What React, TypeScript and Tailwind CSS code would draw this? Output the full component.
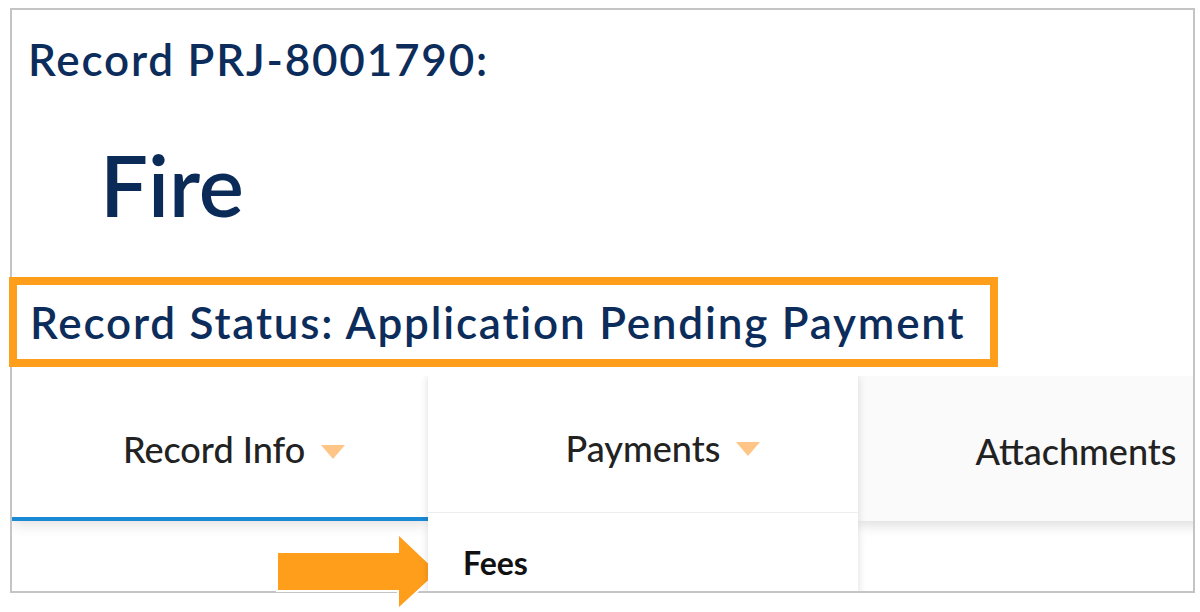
import React from "react";

const Caret = () => (
  <svg width="24" height="14" viewBox="0 0 24 14" className="absolute left-full top-1/2 ml-[16px] -translate-y-[2px]">
    <polygon points="0,0 24,0 12,14" fill="#ffc587" />
  </svg>
);

export default function App() {
  return (
    <div className="relative w-[1200px] h-[612px] bg-white pt-[8px] pl-[10px]" style={{ fontFamily: "Lato, 'Open Sans', sans-serif" }}>
      <div className="w-[1185px] h-[585px] border-2 border-[#c4c4c4] flex flex-col">
        <h1 className="pl-[16px] pt-[23px] text-[44px] leading-[52px] tracking-[1.8px] font-semibold text-[#0c2d5b]">Record PRJ-8001790:</h1>
        <h2 className="pl-[88px] pt-[49px] text-[85px] leading-[100px] font-semibold text-[#0a2a57]">Fire</h2>

        <div className="-ml-[3px] mt-[43px] w-[989px] h-[90px] border-[8px] border-[#ff9e1b] flex items-center pl-[13px]">
          <span className="text-[44px] leading-none tracking-[1.8px] font-semibold text-[#0c2d5b]">Record Status: Application Pending Payment</span>
        </div>

        <div className="flex-1 mt-[9px] overflow-hidden">
          <div className="flex items-start w-[1300px]">
            <div className="w-[416px] h-[145px] bg-white border-b-[4px] border-[#1a8ad4] flex items-center justify-center shadow-[0_4px_12px_rgba(0,0,0,0.12)]">
              <span className="relative text-[36px] font-medium text-[#222] -ml-[12px] pt-[4px]">
                Record Info
                <Caret />
              </span>
            </div>
            <div className="relative z-10 w-[430px] h-[260px] bg-white shadow-[0_0_8px_rgba(0,0,0,0.14)] flex flex-col">
              <div className="h-[137px] border-b border-[#eeeeee] flex items-center justify-center">
                <span className="relative text-[36px] font-medium text-[#222] pt-[8px]">
                  Payments
                  <Caret />
                </span>
              </div>
              <div className="pl-[35px] pt-[26px] text-[32px] font-bold text-[#111]">Fees</div>
            </div>
            <div className="w-[436px] h-[145px] bg-[#fafafa] flex items-center justify-center shadow-[0_4px_12px_rgba(0,0,0,0.14)]">
              <span className="text-[36px] font-medium text-[#222] pt-[4px]">Attachments</span>
            </div>
          </div>
        </div>
      </div>

      <svg className="absolute left-[270px] top-[528px]" width="180" height="88" viewBox="0 0 180 88">
        <polygon
          points="8,25 129,25 129,8 167,44 129,79 129,62 8,62"
          fill="#ff9e1b"
          stroke="#ffffff"
          strokeWidth="4"
          strokeLinejoin="miter"
          paintOrder="stroke"
        />
      </svg>
    </div>
  );
}
